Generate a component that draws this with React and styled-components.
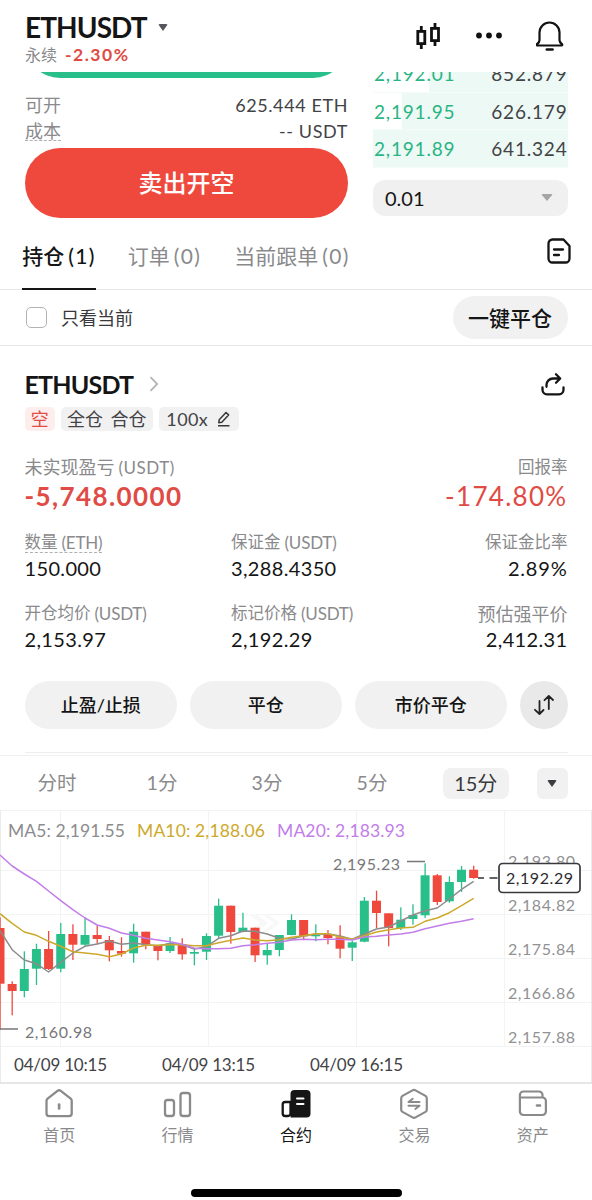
import React from 'react';
import styled, { createGlobalStyle } from 'styled-components';

const candles = [
    // high, body top, body bottom, low, up
    [117.3, 128, 183.7, 230, 0], [181.3, 184, 191, 215.3, 0], [151.3, 169, 191, 197.3, 1], [143.7, 149, 168.7, 185, 1],
    [131, 149, 169, 170, 0], [123, 134, 168.7, 172.3, 1], [124.3, 134, 144.7, 160, 0], [117.7, 135, 144.7, 146.7, 1],
    [125.3, 135, 139, 144.3, 0], [136, 140, 150.3, 161.3, 0], [137.3, 151, 153.7, 156.7, 0], [123.7, 131.7, 153.3, 162.7, 1],
    [131.7, 131.7, 144.3, 149.3, 0], [145.7, 145.7, 151, 160.3, 0], [137, 143.3, 151, 153, 1], [138.3, 144.3, 154.3, 159.7, 0],
    [147.7, 152, 153.7, 165.3, 1], [133.3, 136, 151.7, 160, 1], [98.7, 105.7, 135.7, 138.3, 1], [105.7, 105.7, 132, 143.7, 0],
    [112.7, 127.7, 132, 132.3, 1], [127.7, 127.7, 155.3, 162, 0], [144, 150, 155.3, 164.7, 1], [135, 135, 150, 156.3, 1],
    [114.3, 120, 135, 135.3, 1], [120, 120, 136.3, 139.3, 0], [124.3, 135, 136.3, 141.3, 1], [130, 134, 138, 144.3, 0],
    [125.3, 137.3, 148.7, 158.3, 0], [140.7, 142.3, 147.7, 161, 1], [97, 100.7, 141.7, 142.3, 1], [90.7, 100.7, 113, 128, 0],
    [113.3, 113.3, 128, 146.3, 0], [107.3, 119.7, 128, 130, 1], [104.3, 115, 119, 124.7, 1], [63.3, 75.3, 115.3, 118, 1],
    [74, 75.3, 102, 105, 0], [76.3, 82, 101.3, 102.7, 1], [66, 69.7, 82, 92, 1], [65.7, 69.7, 78, 78.7, 0],
];

const averages = [
    { color: '#8c8c8e', points: [130.7, 149.7, 160, 163.7, 172, 162.3, 153, 146.3, 144, 141, 144.3, 143, 144.7, 145.7, 143.7, 144.7, 149, 146.7, 138.3, 135.7, 131, 131.3, 134, 138.3, 139, 136, 134, 133.7, 136, 139.3, 134, 129, 127, 121, 115, 110.7, 108, 99, 89.3, 81.3] },
    { color: '#cda92b', points: [113.7, 123.3, 132, 135.3, 141.3, 146.3, 151.7, 153, 154.3, 156.7, 154, 148, 145.3, 145.3, 144.7, 144.7, 145.7, 145.7, 142.7, 140.3, 138, 140, 140.7, 139.7, 137.3, 135.7, 133.7, 133.7, 137, 139.3, 135.7, 132, 129.7, 128, 127.3, 121.3, 118, 112.7, 105.7, 98.3] },
    { color: '#c27de9', points: [55, 66, 74, 81.3, 91, 100.7, 109.7, 118, 125, 128.3, 133, 135.3, 138.3, 140, 141.7, 144.3, 148.3, 148.7, 148.7, 148.3, 145.7, 144.7, 143.3, 142.3, 140, 139.3, 139.7, 139.3, 139.3, 140, 137, 136.3, 135, 134, 132.3, 128.7, 126, 123.3, 121.3, 118.7] },
];

const STEP = 12.145;

function Label({ x, y, w, size = 16, color = '#919193', children }) {
    return <text x={x} y={y} textLength={w} fontSize={size} fill={color}>{children}</text>;
}

function Chart() {
    return (
        <ChartSvg width="592" height="272" viewBox="0 0 592 272">
            <g stroke="#f3f3f4" strokeWidth="1">
                {[0.5, 60.5, 104.5, 148.5, 192.5, 236.5].map((y) => <path key={y} d={`M0 ${y}H592`} />)}
                {[60.5, 208.5, 356.5, 504.5].map((x) => <path key={x} d={`M${x} 0V236`} />)}
                <path d="M.5 0V272M591.5 0V272" stroke="#ececee" />
            </g>
            <path d="M248 104h8l12 9-12 9h-8l12-9zM262 104h6l12 9-12 9h-6l12-9z" fill="#f8f8f8" />
            <Label x={508} y={57} w={67}>2,193.80</Label>
            <Label x={508} y={101} w={67}>2,184.82</Label>
            <Label x={508} y={145} w={67}>2,175.84</Label>
            <Label x={508} y={189} w={67}>2,166.86</Label>
            <Label x={508} y={233} w={67}>2,157.88</Label>
            <g transform="translate(0 -10)">
                {candles.map(([high, top, bottom, low, up], i) => (
                    <g key={i} fill={up ? '#29bf8b' : '#ef493e'}>
                        <rect x={i * STEP - 0.6} y={high} width="1.3" height={low - high} />
                        <rect x={i * STEP - 4.5} y={top} width="9" height={bottom - top} />
                    </g>
                ))}
                {averages.map(({ color, points }) => (
                    <polyline
                        key={color}
                        points={points.map((y, i) => `${i * STEP},${y}`).join(' ')}
                        fill="none"
                        stroke={color}
                        strokeWidth="1.5"
                        strokeLinejoin="round"
                    />
                ))}
            </g>
            <Label x={8} y={26.5} w={117} size={17.5} color="#8c8c8e">MA5: 2,191.55</Label>
            <Label x={137} y={26.5} w={128} size={17.5} color="#cda92b">MA10: 2,188.06</Label>
            <Label x={277} y={26.5} w={128} size={17.5} color="#c27de9">MA20: 2,183.93</Label>
            <Label x={333} y={59.5} w={67} color="#77777a">2,195.23</Label>
            <Label x={25} y={227.5} w={67} color="#77777a">2,160.98</Label>
            <path d="M407 51.5h18M0 219h18" stroke="#77777a" strokeWidth="1.3" />
            <path d="M478 68h6M489.5 68h8" stroke="#333338" strokeWidth="1.6" />
            <rect x="499" y="53.5" width="81" height="29" rx="3.5" fill="#fff" stroke="#39393e" strokeWidth="1.7" />
            <Label x={506} y={73.5} w={67} color="#2c2c30">2,192.29</Label>
            <Label x={14} y={261} w={93} size={17} color="#434347">04/09 10:15</Label>
            <Label x={162} y={261} w={93} size={17} color="#434347">04/09 13:15</Label>
            <Label x={310} y={261} w={93} size={17} color="#434347">04/09 16:15</Label>
        </ChartSvg>
    );
}

function Field({ label, unit, value, end, dashed, size, ls = 0.35 }) {
    return (
        <FieldBlock $end={end}>
            <FieldLabel $dashed={dashed} $size={size}>{label}{unit && <Unit $ls={-0.2}>({unit})</Unit>}</FieldLabel>
            <FieldValue $ls={ls}>{value}</FieldValue>
        </FieldBlock>
    );
}

const navItems = [
    {
        title: '首页',
        icon: <g fill="none" stroke="currentColor" strokeWidth="2.3" strokeLinecap="round" strokeLinejoin="round"><path d="M3.5 11.7v12.8a2.6 2.6 0 0 0 2.6 2.6h20a2.6 2.6 0 0 0 2.600-2.600V11.700a2.600 2.600 0 0 0-1-2L17.800 1.900a2.600 2.600 0 0 0-3.300 0L4.600 9.700a2.600 2.600 0 0 0-1.100 2z" /><path d="M16.100 15.500v4" strokeWidth="2.600" /></g>,
    },
    {
        title: '行情',
        icon: <g fill="none" stroke="currentColor" strokeWidth="2.3"><rect x="3" y="11" width="9" height="16" rx="2.6" /><rect x="18.500" y="4" width="9.500" height="23" rx="2.6" /></g>,
    },
    {
        title: '合约',
        active: true,
        icon: <g><path d="M14.5 1h12a4 4 0 0 1 4 4v19.500a4 4 0 0 1-4 4h-16V5a4 4 0 0 1 4-4z" fill="currentColor" /><path d="M10.500 13H5.200a2.500 2.500 0 0 0-2.500 2.500v9a2.500 2.500 0 0 0 2.500 2.500H8a2.500 2.500 0 0 0 2.500-2.500z" fill="#fff" stroke="currentColor" strokeWidth="2.3" /><path d="M17 9.500h6.500M17 15h6.500" stroke="#fff" strokeWidth="2" strokeLinecap="round" /></g>,
    },
    {
        title: '交易',
        icon: <g fill="none" stroke="currentColor" strokeWidth="2.2" strokeLinecap="round" strokeLinejoin="round"><path d="M14.500 1.400a3 3 0 0 1 3 0l10 5.500a3 3 0 0 1 1.300 2.500v11a3 3 0 0 1-1.300 2.500l-10 5.500a3 3 0 0 1-3 0l-10-5.500a3 3 0 0 1-1.300-2.500v-11a3 3 0 0 1 1.300-2.500z" /><path d="M21.500 13h-11l4.200-3.200M10.500 16.800h11l-4.200 3.200" strokeWidth="2" /></g>,
    },
    {
        title: '资产',
        icon: <g fill="none" stroke="currentColor" strokeWidth="2.2" strokeLinecap="round"><path d="M2.900 8.500v14a3.500 3.500 0 0 0 3.500 3.500h19a3.500 3.500 0 0 0 3.500-3.500V12a3.500 3.500 0 0 0-3.500-3.500zM2.900 8.500V6A3.500 3.500 0 0 1 6.400 2.500H22A3.500 3.500 0 0 1 25.500 6v2.500" /><path d="M20 16.500h3" strokeWidth="2.6" /></g>,
    },
];

function App() {
    return (
        <Screen>
            <GlobalStyle />
            <Header>
                <Pair>
                    <PairName>ETHUSDT<Caret $color="#55555e" $w={5.5} $h={7} /></PairName>
                    <PairChange>永续<b>-2.30%</b></PairChange>
                </Pair>
                <HeaderIcons>
                    <svg width="26" height="28" viewBox="0 0 26 28" fill="none" stroke="#111" strokeWidth="2.8">
                        <path d="M5.300 4v5M5.300 22v5M19 1v5M19 19v5" />
                        <rect x="1.800" y="9.400" width="7" height="12.200" />
                        <rect x="15.500" y="6.400" width="7" height="12.200" />
                    </svg>
                    <svg width="26" height="28" viewBox="0 0 26 28" fill="#111">
                        <circle cx="3" cy="13.5" r="2.9" />
                        <circle cx="13" cy="13.5" r="2.9" />
                        <circle cx="23" cy="13.5" r="2.9" />
                    </svg>
                    <svg width="28" height="32" viewBox="0 0 28 32" fill="none" stroke="#111" strokeWidth="2.2" strokeLinecap="round" strokeLinejoin="round">
                        <path d="M3.500 12.500a10 10 0 0 1 20 0v7.700c0 1.600 1 2.600 2.200 3.600.9.800.7 1.700-.4 1.700H1.700c-1.100 0-1.300-.9-.4-1.700 1.200-1 2.200-2 2.200-3.600z" />
                        <path d="M10.800 29.500h5.800" strokeWidth="2.5" />
                    </svg>
                </HeaderIcons>
            </Header>

            <Trade>
                <OrderForm>
                    <BigButton $color="#29bf8b" />
                    <Info>
                        <InfoRow><span>可开</span><Amount $ls={0.6}>625.444 ETH</Amount></InfoRow>
                        <InfoRow><Dashed>成本</Dashed><Amount $ls={0.6}>-- USDT</Amount></InfoRow>
                    </Info>
                    <BigButton $color="#ef493e">卖出开空</BigButton>
                </OrderForm>
                <Book>
                    <BookRow $empty={56}><Bid>2,192.01</Bid><span>852.879</span></BookRow>
                    <BookRow $empty={29}><Bid>2,191.95</Bid><span>626.179</span></BookRow>
                    <BookRow $empty={0}><Bid>2,191.89</Bid><span>641.324</span></BookRow>
                    <Precision>0.01<Caret $color="#a5a5a8" $w={6} $h={7} /></Precision>
                </Book>
            </Trade>

            <Tabs>
                <Tab $active $w={74}>持仓<TabCount>(1)</TabCount></Tab>
                <Tab $w={75}>订单<TabCount>(0)</TabCount></Tab>
                <Tab $w={118}>当前跟单<TabCount>(0)</TabCount></Tab>
                <svg width="24" height="26" viewBox="0 0 24 26" fill="none" stroke="#151515" strokeWidth="2.3" strokeLinecap="round" strokeLinejoin="round">
                    <path d="M5.5 1.500h11L22.500 8v12.500a4 4 0 0 1-4 4h-13a4 4 0 0 1-4-4v-15a4 4 0 0 1 4-4z" />
                    <path d="M7 11.500h9M7 17h5" />
                </svg>
            </Tabs>

            <FilterRow>
                <Checkbox />
                <span>只看当前</span>
                <CloseAll>一键平仓</CloseAll>
            </FilterRow>

            <Position>
                <PositionHead>
                    <Symbol>ETHUSDT</Symbol>
                    <svg width="10" height="16" viewBox="0 0 10 16" fill="none" stroke="#b5b5b8" strokeWidth="1.8"><path d="M1.500 1.200 8.200 8l-6.700 6.800" /></svg>
                    <ShareIcon width="24" height="24" viewBox="0 0 24 24" fill="none" stroke="#151515" strokeWidth="2.3" strokeLinecap="round" strokeLinejoin="round">
                        <path d="M1.500 15.500v2.300a4.500 4.500 0 0 0 4.500 4.500h12a4.500 4.500 0 0 0 4.500-4.500v-2.300" />
                        <path d="M5.500 14.800V13a6.500 6.500 0 0 1 6.500-6.500h7M15 2.300 19.200 6.500 15 10.700" />
                    </ShareIcon>
                </PositionHead>
                <Tags>
                    <Tag $w={30.5} $red>空</Tag>
                    <Tag $w={91.5}>全仓 合仓</Tag>
                    <Tag $w={80.5}>
                        <Amount $ls={0.4}>100x</Amount>
                        <svg width="14" height="16" viewBox="0 0 14 16" fill="none" stroke="#39393c" strokeWidth="1.5" strokeLinejoin="round">
                            <path d="M1.800 11.700 2.200 8.700 9 1.500l2.600 2.400-6.800 7.300zM1 14.800h11.500" />
                        </svg>
                    </Tag>
                </Tags>
                <Summary>
                    <div>
                        <SummaryLabel $size={18}>未实现盈亏<Unit $ls={0.5}>(USDT)</Unit></SummaryLabel>
                        <Profit $weight={700} $ls={1.4}>-5,748.0000</Profit>
                    </div>
                    <SummaryRight>
                        <SummaryLabel $size={16.5}>回报率</SummaryLabel>
                        <Profit $weight={400} $ls={1.3}>-174.80%</Profit>
                    </SummaryRight>
                </Summary>
                <Fields>
                    <Field label="数量" unit="ETH" value="150.000" dashed />
                    <Field label="保证金" unit="USDT" value="3,288.4350" />
                    <Field label="保证金比率" value="2.89%" end ls={0.8} />
                    <Field label="开仓均价" unit="USDT" value="2,153.97" />
                    <Field label="标记价格" unit="USDT" value="2,192.29" />
                    <Field label="预估强平价" value="2,412.31" size={18} end />
                </Fields>
                <Actions>
                    <Action>止盈/止损</Action>
                    <Action>平仓</Action>
                    <Action>市价平仓</Action>
                    <Swap>
                        <svg width="20" height="20" viewBox="0 0 20 20" fill="none" stroke="#222" strokeWidth="1.8" strokeLinecap="round" strokeLinejoin="round">
                            <path d="M5.500 6v13M1 14.800 5.500 19l4-4M14.800 14V1M10.500 5.200 14.800 1 19 5" />
                        </svg>
                    </Swap>
                </Actions>
            </Position>

            <Intervals>
                <Interval>分时</Interval>
                <Interval>1分</Interval>
                <Interval>3分</Interval>
                <Interval>5分</Interval>
                <ActiveInterval>15分</ActiveInterval>
                <MoreIntervals><Caret $color="#3c3c40" $w={5.5} $h={7} /></MoreIntervals>
            </Intervals>

            <Chart />

            <Nav>
                {navItems.map((item) => (
                    <NavItem key={item.title} $active={item.active}>
                        <svg width="32" height="32" viewBox="0 0 32 30">{item.icon}</svg>
                        {item.title}
                    </NavItem>
                ))}
            </Nav>
            <HomeBar />
        </Screen>
    );
}

export default App;

const GlobalStyle = createGlobalStyle`
    * {
        box-sizing: border-box;
    }
    body {
        margin: 0;
        background: #fff;
    }
`

const Screen = styled.div`
    width: 592px;
    height: 1200px;
    overflow: hidden;
    display: flex;
    flex-direction: column;
    background: #fff;
    color: #151515;
    font-family: Lato, 'Noto Sans CJK SC', sans-serif;
    font-size: 18px;
    line-height: 1;
    white-space: nowrap;
    >* {
        flex-shrink: 0;
    }
`

const Caret = styled.i`
    border: solid transparent;
    border-width: ${(props) => props.$h}px ${(props) => props.$w}px 0;
    border-top-color: ${(props) => props.$color};
    border-radius: 2px;
`

const Header = styled.header`
    height: 72px;
    padding: 12px 28px 0 25px;
    display: flex;
    justify-content: space-between;
`

const Pair = styled.div`
    display: flex;
    flex-direction: column;
`

const PairName = styled.div`
    height: 30px;
    display: flex;
    align-items: center;
    gap: 11px;
    font-size: 28px;
    font-weight: 700;
    letter-spacing: -0.9px;
`

const PairChange = styled.div`
    height: 25px;
    display: flex;
    align-items: center;
    gap: 8px;
    font-size: 16px;
    color: #8a8a8c;
    b {
        font-size: 17.5px;
        color: #e04b45;
        letter-spacing: 1.5px;
    }
`

const HeaderIcons = styled.div`
    display: flex;
    align-items: center;
    gap: 34px;
    height: 48px;
`

const Trade = styled.section`
    height: 146px;
    padding: 0 24.5px 0 25px;
    overflow: hidden;
    display: flex;
    align-items: flex-end;
    justify-content: space-between;
`

const OrderForm = styled.div`
    width: 323px;
`

const BigButton = styled.div`
    height: 70px;
    border-radius: 35px;
    display: flex;
    align-items: center;
    justify-content: center;
    background: ${(props) => props.$color};
    color: #fff;
    font-size: 24px;
    font-weight: 500;
`

const Info = styled.div`
    height: 70px;
    padding-top: 14px;
`

const InfoRow = styled.div`
    height: 26px;
    display: flex;
    align-items: center;
    justify-content: space-between;
    color: #8a8a8c;
`

const Amount = styled.span`
    color: #434347;
    letter-spacing: ${(props) => props.$ls}px;
`

const Dashed = styled.span`
    border-bottom: 1px dashed #b0b0b2;
`

const Book = styled.div`
    width: 194.500px;
    padding-bottom: 2px;
`

const BookRow = styled.div`
    height: 37.3px;
    padding-left: 1px;
    display: flex;
    align-items: center;
    justify-content: space-between;
    border-bottom: 1px solid #f4fbf8;
    background: linear-gradient(to right, transparent ${(props) => props.$empty}px, #edf9f5 ${(props) => props.$empty}px);
    font-size: 19px;
    letter-spacing: 0.8px;
    color: #434347;
`

const Bid = styled.span`
    color: #29b583;
`

const Precision = styled.div`
    height: 36.5px;
    margin-top: 12px;
    padding: 0 15px 0 12px;
    border-radius: 12px;
    background: #f0f0f0;
    display: flex;
    align-items: center;
    justify-content: space-between;
    font-size: 20px;
`

const Tabs = styled.div`
    height: 72px;
    padding: 0 21px 0 22px;
    display: flex;
    align-items: flex-start;
    gap: 31px;
    border-bottom: 1.5px solid #e8e8ea;
    svg {
        margin: 20px 0 0 auto;
    }
`

const Tab = styled.div`
    width: ${(props) => props.$w}px;
    height: 72px;
    padding-top: 4px;
    display: flex;
    align-items: center;
    justify-content: center;
    gap: 4px;
    font-size: 21px;
    font-weight: ${(props) => (props.$active ? 500 : 400)};
    color: ${(props) => (props.$active ? '#151515' : '#8a8a8c')};
    border-bottom: 2px solid ${(props) => (props.$active ? '#151515' : 'transparent')};
`

const TabCount = styled.span`
    letter-spacing: 1.3px;
`

const FilterRow = styled.div`
    height: 56px;
    padding: 0 24.5px 0 26px;
    display: flex;
    align-items: center;
    color: #39393c;
    border-bottom: 1.5px solid #e8e8ea;
`

const Checkbox = styled.i`
    width: 21px;
    height: 21px;
    margin-right: 14px;
    border: 1.5px solid #b3b3b6;
    border-radius: 5px;
`

const CloseAll = styled.div`
    width: 115px;
    height: 43px;
    margin-left: auto;
    border-radius: 22px;
    background: #f1f1f1;
    display: flex;
    align-items: center;
    justify-content: center;
    font-size: 21px;
    font-weight: 500;
    color: #151515;
`

const Position = styled.section`
    height: 406.5px;
    margin: 0 24.5px;
    border-bottom: 1px solid #eeeeef;
`

const PositionHead = styled.div`
    height: 61px;
    padding-top: 15px;
    display: flex;
    align-items: center;
    gap: 16px;
`

const Symbol = styled.div`
    font-size: 25px;
    font-weight: 700;
    letter-spacing: -0.8px;
`

const ShareIcon = styled.svg`
    margin: 0 3px 0 auto;
`

const Tags = styled.div`
    display: flex;
    gap: 6px;
`

const Tag = styled.div`
    width: ${(props) => props.$w}px;
    height: 24px;
    border-radius: 5px;
    display: flex;
    align-items: center;
    justify-content: center;
    gap: 9px;
    color: ${(props) => (props.$red ? '#e04b45' : '#434347')};
    background: ${(props) => (props.$red ? '#feeded' : '#f1f1f1')};
    word-spacing: 3px;
`

const Summary = styled.div`
    margin-top: 24px;
    display: flex;
    justify-content: space-between;
`

const SummaryRight = styled.div`
    display: flex;
    flex-direction: column;
    align-items: flex-end;
`

const SummaryLabel = styled.div`
    height: 24px;
    display: flex;
    align-items: center;
    font-size: ${(props) => props.$size}px;
    color: #8a8a8c;
`

const Unit = styled.span`
    margin-left: 4px;
    font-size: 17px;
    letter-spacing: ${(props) => props.$ls || 0}px;
`

const Profit = styled.div`
    height: 34px;
    display: flex;
    align-items: center;
    font-size: 26px;
    font-weight: ${(props) => props.$weight};
    letter-spacing: ${(props) => props.$ls}px;
    color: #e04b45;
`

const Fields = styled.div`
    margin-top: 19px;
    display: grid;
    grid-template-columns: 206.5px 1fr auto;
    row-gap: 23px;
`

const FieldBlock = styled.div`
    display: flex;
    flex-direction: column;
    align-items: ${(props) => (props.$end ? 'flex-end' : 'flex-start')};
`

const FieldLabel = styled.div`
    height: 21px;
    margin-bottom: 1.5px;
    display: flex;
    align-items: center;
    font-size: ${(props) => props.$size || 16.5}px;
    color: #8a8a8c;
    border-bottom: 1px ${(props) => (props.$dashed ? 'dashed #b0b0b2' : 'solid transparent')};
`

const FieldValue = styled.div`
    height: 26px;
    display: flex;
    align-items: center;
    font-size: 20px;
    letter-spacing: ${(props) => props.$ls}px;
`

const Actions = styled.div`
    margin-top: 29px;
    display: flex;
    gap: 12.5px;
`

const Action = styled.div`
    flex: 1;
    height: 48px;
    border-radius: 24px;
    background: #f1f1f1;
    display: flex;
    align-items: center;
    justify-content: center;
    font-weight: 500;
`

const Swap = styled.div`
    width: 48px;
    height: 48px;
    border-radius: 50%;
    background: #e9e9e9;
    display: flex;
    align-items: center;
    justify-content: center;
`

const Intervals = styled.div`
    height: 55px;
    margin-top: 2.5px;
    padding: 0 24.5px 0 4.5px;
    border-top: 1.5px solid #f0f0f1;
    display: flex;
    align-items: center;
`

const Interval = styled.div`
    width: 105px;
    text-align: center;
    font-size: 19.5px;
    color: #8a8a8c;
`

const ActiveInterval = styled.div`
    width: 65.5px;
    height: 31px;
    margin-left: 18.5px;
    border-radius: 8px;
    background: #f1f1f1;
    display: flex;
    align-items: center;
    justify-content: center;
    font-size: 20px;
    color: #39393c;
`

const MoreIntervals = styled.div`
    width: 30.5px;
    height: 31px;
    margin-left: auto;
    border-radius: 6px;
    background: #f1f1f1;
    display: flex;
    align-items: center;
    justify-content: center;
`

const ChartSvg = styled.svg`
    display: block;
    font-family: Lato, sans-serif;
`

const Nav = styled.nav`
    height: 107px;
    padding-top: 4px;
    border-top: 2px solid #e6e6e8;
    display: flex;
`

const NavItem = styled.div`
    flex: 1;
    display: flex;
    flex-direction: column;
    align-items: center;
    gap: 7px;
    font-size: 16px;
    color: ${(props) => (props.$active ? '#151515' : '#8a8a8c')};
`

const HomeBar = styled.div`
    width: 211px;
    height: 8px;
    margin-left: 191px;
    border-radius: 4px;
    background: #000;
`
